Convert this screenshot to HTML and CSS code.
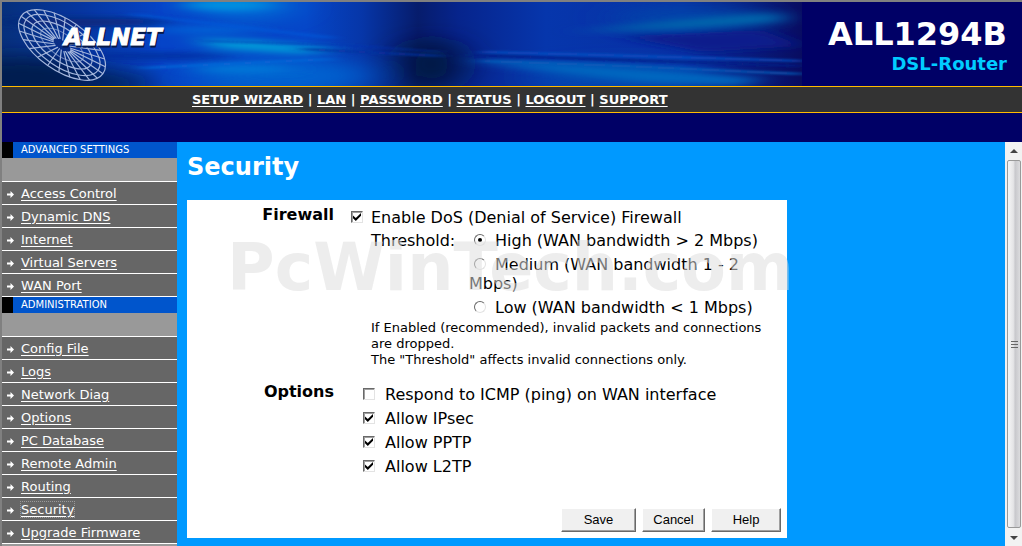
FILE: index.html
```
<!DOCTYPE html>
<html lang="en">

<head>
    <meta charset="utf-8">
    <title>ALL1294B DSL-Router</title>
    <link rel="stylesheet" href="styles.css">
</head>

<body>
    <header class="header">
        <div class="banner">
            <svg class="banner-bg" viewBox="0 0 800 84" preserveAspectRatio="none" aria-hidden="true">
                <defs>
                    <linearGradient id="base" x1="0" x2="1" y1="0" y2="0">
                        <stop offset="0" stop-color="#06307c" />
                        <stop offset="0.1" stop-color="#0636a0" />
                        <stop offset="0.2" stop-color="#0544c8" />
                        <stop offset="0.38" stop-color="#0546c8" />
                        <stop offset="0.45" stop-color="#0636a8" />
                        <stop offset="0.52" stop-color="#061c6c" />
                        <stop offset="0.57" stop-color="#06248c" />
                        <stop offset="0.68" stop-color="#0636ac" />
                        <stop offset="0.85" stop-color="#0730a4" />
                        <stop offset="1" stop-color="#080c60" />
                    </linearGradient>
                    <filter id="soft" filterUnits="userSpaceOnUse" x="-60" y="-40" width="920" height="164">
                        <feGaussianBlur stdDeviation="14 3" />
                    </filter>
                    <filter id="wide" filterUnits="userSpaceOnUse" x="-60" y="-40" width="920" height="164">
                        <feGaussianBlur stdDeviation="20 9" />
                    </filter>
                    <filter id="thin" filterUnits="userSpaceOnUse" x="-60" y="-40" width="920" height="164">
                        <feGaussianBlur stdDeviation="8 1" />
                    </filter>
                </defs>
                <rect width="800" height="84" fill="url(#base)" />
                <g filter="url(#wide)">
                    <ellipse cx="20" cy="76" rx="80" ry="22" fill="#041f50" />
                    <ellipse cx="110" cy="82" rx="40" ry="12" fill="#04205c" />
                    <ellipse cx="430" cy="62" rx="30" ry="26" fill="#051440" />
                    <ellipse cx="280" cy="74" rx="90" ry="16" fill="#0464d0" />
                    <ellipse cx="690" cy="16" rx="80" ry="10" fill="#0548ac" />
                    <ellipse cx="620" cy="74" rx="90" ry="12" fill="#0450b4" />
                    <ellipse cx="245" cy="4" rx="50" ry="12" fill="#0470d8" />
                </g>
                <g filter="url(#soft)">
                    <ellipse cx="225" cy="3" rx="45" ry="6" fill="#0590e0" />
                    <path d="M190 36L250 38L340 47L300 52L215 47Z" fill="#0598d8" />
                    <ellipse cx="205" cy="28" rx="50" ry="3" fill="#0568d8" />
                    <ellipse cx="240" cy="67" rx="50" ry="4" fill="#0578d8" />
                    <ellipse cx="150" cy="54" rx="80" ry="3" fill="#052c98" />
                    <ellipse cx="80" cy="20" rx="90" ry="4" fill="#072878" />
                    <path d="M570 30L700 16L780 10L780 20L690 26Z" fill="#0466ac" />
                    <path d="M460 57L560 62L760 76L740 84L640 80L520 66Z" fill="#0468c0" />
                    <path d="M620 34L760 28L800 44L700 50Z" fill="#0a1c8c" />
                </g>
                <g filter="url(#thin)" fill="none">
                    <path d="M480 50L600 53L800 59" stroke="#0b50c4" stroke-width="2" />
                    <path d="M470 53L620 58L800 64" stroke="#071f88" stroke-width="2" />
                    <path d="M480 59L620 64L800 72" stroke="#0b60bc" stroke-width="2" />
                    <path d="M200 39L340 43L440 50" stroke="#0a34b0" stroke-width="1" />
                    <path d="M300 47L440 54" stroke="#0830a0" stroke-width="2" />
                    <path d="M130 12L330 36" stroke="#0858d8" stroke-width="2" />
                    <path d="M140 66L330 57" stroke="#0868d8" stroke-width="2" />
                </g>
            </svg>
            <svg class="logo" viewBox="0 0 150 76" width="150" height="76" role="img" aria-label="ALLNET">
                <g transform="translate(46 38) rotate(35)" fill="none" stroke="#a4b6dc" stroke-width="1.200">
                    <ellipse rx="50" ry="25" />
                    <ellipse rx="44" ry="21" />
                    <ellipse rx="35" ry="16" />
                    <ellipse rx="25" ry="11" opacity="0.6" />
                    <path d="M9 0L50 0M9 1L48 7M8 2L43 13M6 3L35 18M5 4L25 22M2 4L13 24M0 4L0 25M-2 4L-13 24M-5 4L-25 22M-6 3L-35 18M-8 2L-43 13M-9 1L-48 7M-9 0L-50 0M-9 -1L-48 -7M-8 -2L-43 -13M-6 -3L-35 -18M-5 -4L-25 -22M-2 -4L-13 -24M0 -4L0 -25M2 -4L13 -24M5 -4L25 -22M6 -3L35 -18M8 -2L43 -13M9 -1L48 -7" />
                    <ellipse rx="10" ry="4" fill="#0a2e86" stroke="none" />
                </g>
                <text class="logo-shadow" x="49" y="40">ALLNET</text>
                <text class="logo-text" x="48" y="38">ALLNET</text>
            </svg>
        </div>
        <div class="model">
            <div class="model-name">ALL1294B</div>
            <div class="model-type">DSL-Router</div>
        </div>
    </header>

    <nav class="menu">
        <a href="#">SETUP WIZARD</a> |
        <a href="#">LAN</a> |
        <a href="#">PASSWORD</a> |
        <a href="#">STATUS</a> |
        <a href="#">LOGOUT</a> |
        <a href="#">SUPPORT</a>
    </nav>

    <div class="page">
        <nav class="sidebar">
            <h2>ADVANCED SETTINGS</h2>
            <ul>
                <li><a href="#">Access Control</a></li>
                <li><a href="#">Dynamic DNS</a></li>
                <li><a href="#">Internet</a></li>
                <li><a href="#">Virtual Servers</a></li>
                <li><a href="#">WAN Port</a></li>
            </ul>
            <h2>ADMINISTRATION</h2>
            <ul>
                <li><a href="#">Config File</a></li>
                <li><a href="#">Logs</a></li>
                <li><a href="#">Network Diag</a></li>
                <li><a href="#">Options</a></li>
                <li><a href="#">PC Database</a></li>
                <li><a href="#">Remote Admin</a></li>
                <li><a href="#">Routing</a></li>
                <li><a href="#" class="current">Security</a></li>
                <li><a href="#">Upgrade Firmware</a></li>
            </ul>
        </nav>

        <main class="content">
            <h1>Security</h1>
            <form class="panel">
                <div class="row">
                    <div class="row-title">Firewall</div>
                    <div class="row-body">
                        <div class="check">
                            <input type="checkbox" id="dos" checked>
                            <label for="dos">Enable DoS (Denial of Service) Firewall</label>
                        </div>
                        <div class="threshold">
                            <div class="threshold-title">Threshold:</div>
                            <div class="threshold-list">
                                <div><input type="radio" name="threshold" id="high" checked><label for="high">High (WAN bandwidth &gt; 2 Mbps)</label></div>
                                <div><input type="radio" name="threshold" id="medium"><label for="medium">Medium (WAN bandwidth 1 - 2 Mbps)</label></div>
                                <div><input type="radio" name="threshold" id="low"><label for="low">Low (WAN bandwidth &lt; 1 Mbps)</label></div>
                            </div>
                        </div>
                        <p class="help">If Enabled (recommended), invalid packets and connections are dropped.<br>The "Threshold" affects invalid connections only.</p>
                    </div>
                </div>
                <div class="row">
                    <div class="row-title">Options</div>
                    <div class="row-body options">
                        <div class="check">
                            <input type="checkbox" id="icmp">
                            <label for="icmp">Respond to ICMP (ping) on WAN interface</label>
                        </div>
                        <div class="check">
                            <input type="checkbox" id="ipsec" checked>
                            <label for="ipsec">Allow IPsec</label>
                        </div>
                        <div class="check">
                            <input type="checkbox" id="pptp" checked>
                            <label for="pptp">Allow PPTP</label>
                        </div>
                        <div class="check">
                            <input type="checkbox" id="l2tp" checked>
                            <label for="l2tp">Allow L2TP</label>
                        </div>
                    </div>
                </div>
                <div class="buttons">
                    <button type="submit" class="save">Save</button>
                    <button type="reset">Cancel</button>
                    <button type="button" class="help-button">Help</button>
                </div>
                <div class="watermark">PcWinTech.com</div>
            </form>
        </main>

        <div class="scrollbar" aria-hidden="true">
            <svg width="17" height="18" viewBox="0 0 17 18"><path d="M5 11L9 7L13 11Z" fill="#444" /></svg>
            <div class="thumb">
                <svg width="7" height="9" viewBox="0 0 7 9"><path d="M0 1.500H7M0 4.500H7M0 7.500H7" stroke="#666" /></svg>
            </div>
            <svg width="17" height="18" viewBox="0 0 17 18"><path d="M5 8L9 12L13 8Z" fill="#444" /></svg>
        </div>
    </div>
</body>

</html>
```
FILE: styles.css
```
* {
    box-sizing: border-box;
}

body {
    font-family: "DejaVu Sans", Verdana, sans-serif;
    font-size: 16px;
    height: 100vh;
    margin: 0;
    display: flex;
    flex-direction: column;
    overflow: hidden;
    background: #000066;
    border-top: 2px solid #808080;
    border-left: 2px solid #808080;
}

h1,
h2,
ul,
p {
    margin: 0;
    padding: 0;
}

.header {
    display: flex;
    flex-shrink: 0;
    height: 84px;
}

.banner {
    flex: 1;
    position: relative;
    overflow: hidden;
}

.banner-bg {
    position: absolute;
    width: 100%;
    height: 100%;
}

.logo {
    position: relative;
    display: block;
    margin: 5px 14px;
}

.logo text {
    font-size: 23px;
    font-weight: bold;
    font-style: italic;
}

.logo-text {
    fill: #ffffff;
    stroke: #ffffff;
    stroke-width: 1px;
}

.logo-shadow {
    fill: #061848;
    stroke: #061848;
    stroke-width: 1px;
}

.model {
    width: 220px;
    padding: 13px 15px 0 0;
    text-align: right;
    font-weight: bold;
}

.model-name {
    color: #ffffff;
    font-size: 32px;
    line-height: 38px;
}

.model-type {
    color: #00ccff;
    font-size: 18px;
    line-height: 22px;
}

.menu {
    flex-shrink: 0;
    padding-left: 190px;
    background: #333333;
    border-top: 1px solid #ffbb00;
    border-bottom: 1px solid #ffbb00;
    color: #ffffff;
    font-size: 13px;
    font-weight: bold;
    line-height: 25px;
    white-space: nowrap;
}

.menu a,
.sidebar a {
    color: #ffffff;
    text-underline-offset: 2px;
}

.page {
    flex: 1;
    display: flex;
    min-height: 0;
    margin-top: 29px;
}

.sidebar {
    width: 175px;
    flex-shrink: 0;
    overflow: hidden;
    background: #999999;
}

.sidebar h2 {
    margin-bottom: 23px;
    padding-left: 8px;
    border-left: 11px solid #000000;
    background: #0055cc;
    color: #ffffff;
    font-size: 10px;
    font-weight: normal;
    line-height: 16px;
}

.sidebar ul {
    list-style: none;
    border-bottom: 1px solid #ffffff;
}

.sidebar li {
    display: flex;
    align-items: center;
    height: 23px;
    padding-left: 5px;
    border-top: 1px solid #ffffff;
    background: #666666;
    font-size: 13px;
    line-height: 15px;
}

.sidebar li::before {
    content: "";
    width: 7px;
    height: 7px;
    margin: 3px 7px 0 0;
    background: #ffffff;
    clip-path: polygon(0 36%, 50% 36%, 50% 0, 100% 50%, 50% 100%, 50% 64%, 0 64%);
}

.sidebar .current {
    outline: 1px dotted #999999;
}

.content {
    flex: 1;
    padding: 8px 10px;
    background: #0099ff;
}

h1 {
    color: #ffffff;
    font-size: 24px;
    line-height: 34px;
    margin-bottom: 16px;
}

.panel {
    position: relative;
    max-width: 600px;
    padding: 5px 6px 6px 0;
    background: #ffffff;
    color: #000000;
}

.row {
    display: flex;
    margin-bottom: 14px;
}

.row-title {
    width: 147px;
    flex-shrink: 0;
    margin-right: 17px;
    text-align: right;
    font-weight: bold;
    line-height: 20px;
}

.row-body {
    flex: 1;
}

.check {
    display: flex;
    align-items: center;
    gap: 8px;
    height: 24px;
}

.options {
    padding-left: 12px;
}

.options .check {
    gap: 10px;
}

input {
    appearance: none;
    flex-shrink: 0;
    width: 12px;
    height: 12px;
    margin: 0;
    background: #ffffff;
    border: 1px solid;
    border-color: #696969 #e3e3e3 #e3e3e3 #696969;
}

input[type="checkbox"] {
    box-shadow: inset 1px 1px #a0a0a0;
}

input[type="checkbox"]:checked::before {
    content: "";
    display: block;
    width: 8px;
    height: 8px;
    margin: 1px;
    background: #000000;
    clip-path: polygon(0 30%, 35% 62%, 100% 0, 100% 35%, 35% 100%, 0 66%);
}

input[type="radio"] {
    margin: 0 9px 0 5px;
    border-radius: 50%;
}

input[type="radio"]:checked::before {
    content: "";
    display: block;
    width: 4px;
    height: 4px;
    margin: 3px;
    border-radius: 50%;
    background: #000000;
}

.threshold {
    display: flex;
    padding-left: 20px;
    line-height: 19px;
}

.threshold-title {
    width: 98px;
    flex-shrink: 0;
    padding-top: 2px;
}

.threshold-list div {
    max-width: 310px;
    padding: 2px 0 3px;
}

.help {
    max-width: 420px;
    padding-left: 20px;
    font-size: 13px;
    line-height: 16px;
}

.buttons {
    display: flex;
    justify-content: flex-end;
    gap: 6px;
    padding-top: 16px;
}

button {
    width: 63px;
    height: 24px;
    padding: 0 0 1px;
    background: #f0f0f0;
    border: 1px solid;
    border-color: #ffffff #696969 #696969 #ffffff;
    box-shadow: inset -1px -1px #a0a0a0;
    color: #000000;
    font-family: "Liberation Sans", Arial, sans-serif;
    font-size: 13px;
}

.save {
    width: 75px;
}

.help-button {
    width: 70px;
}

/* lies over the form and runs past its right edge */
.watermark {
    position: absolute;
    top: 30px;
    left: 40px;
    color: rgba(221, 221, 221, 0.53);
    font-size: 65px;
    font-weight: bold;
    line-height: 76px;
    pointer-events: none;
}

.scrollbar {
    width: 17px;
    flex-shrink: 0;
    display: flex;
    flex-direction: column;
    background: #f2f2f2;
}

.scrollbar svg {
    flex-shrink: 0;
}

.thumb {
    flex: 1;
    display: flex;
    align-items: center;
    justify-content: center;
    margin: 0 1px 0 2px;
    border: 1px solid #999999;
    border-radius: 2px;
    background: linear-gradient(to right, #f6f6f6, #e4e4e6 45%, #c8c8cc 60%, #dcdcde);
}
```
